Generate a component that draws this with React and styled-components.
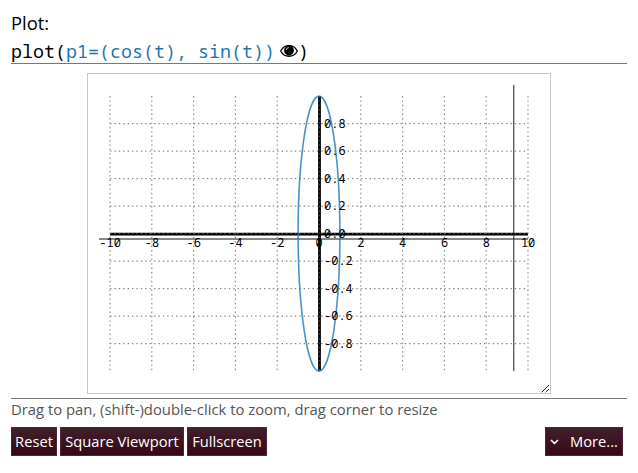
import React from "react";
import styled, { createGlobalStyle } from "styled-components";

const GlobalStyle = createGlobalStyle`
  body {
    margin: 0;
    background: #fff;
    color: #000;
    font-family: "Open Sans", sans-serif;
  }
`;

const Page = styled.main`
  display: flex;
  flex-direction: column;
  box-sizing: border-box;
  height: 473px;
  padding: 9px 11px 0;
  overflow: hidden;
`;

const Title = styled.div`
  height: 29px;
  font-size: 18.33px;
  line-height: 28px;
`;

const Expression = styled.div`
  display: flex;
  align-items: center;
  box-sizing: border-box;
  height: 26px;
  width: 616px;
  border-bottom: 1px solid #777;
  font: 18.33px/26px "Noto Sans Mono", "DejaVu Sans Mono", monospace;
  white-space: pre;
`;

const Argument = styled.span`
  color: #1f77b4;
`;

const EyeIcon = styled.svg`
  width: 18px;
  height: 14px;
  margin: 1px 0 0 5px;
`;

const PlotArea = styled.section`
  display: flex;
  box-sizing: border-box;
  width: 616px;
  height: 335px;
  padding: 9px 0 0 76px;
  border-bottom: 1px solid #777;
`;

const PlotFrame = styled.div`
  box-sizing: border-box;
  width: 464px;
  height: 321px;
  border: 1px solid #c8c8c8;
`;

const Chart = styled.svg`
  display: block;
  width: 462px;
  height: 319px;
`;

const TickLabel = styled.text`
  font: 12px "Noto Sans Mono", "DejaVu Sans Mono", monospace;
  fill: #000;
`;

const Hint = styled.div`
  height: 22px;
  color: #555;
  font-size: 14.83px;
  line-height: 20px;
`;

const Toolbar = styled.div`
  display: flex;
  gap: 3px;
  width: 612px;
  margin-top: 6px;
`;

const Button = styled.button`
  display: flex;
  align-items: center;
  justify-content: center;
  box-sizing: border-box;
  width: ${(p) => p.$width}px;
  height: 29px;
  margin: 0 0 0 ${(p) => (p.$end ? "auto" : "0")};
  padding: 0;
  gap: 11px;
  border: 1px solid #54233a;
  background: linear-gradient(#40202a, #360818);
  color: #fff;
  font: 14.7px/27px "Open Sans", sans-serif;
  white-space: nowrap;
`;

const X0 = 319;
const Y0 = 233.6;
const UNIT_X = 20.9;
const UNIT_Y = 137.5;
const xTicks = [-10, -8, -6, -4, -2, 0, 2, 4, 6, 8, 10];
const yTicks = [0.8, 0.6, 0.4, 0.2, 0, -0.2, -0.4, -0.6, -0.8];

function Plot() {
  return (
    <Chart viewBox="88 74 462 319">
      <line x1="110" x2="528" y1="234.2" y2="234.2" stroke="#000" strokeWidth="2.8" />
      <line x1="319.5" x2="319.5" y1="96" y2="371" stroke="#000" strokeWidth="2.8" />
      <g stroke="#888" strokeDasharray="1.4 3">
        {xTicks.map((t) => (
          <line
            key={t}
            x1={X0 + t * UNIT_X}
            x2={X0 + t * UNIT_X}
            y1="96"
            y2="371"
            strokeWidth={t === 0 ? 0.5 : 1.15}
            transform={t === 0 ? "translate(.5 0)" : undefined}
          />
        ))}
        {yTicks.map((t) => (
          <line
            key={t}
            x1="110"
            x2="528"
            y1={Y0 - t * UNIT_Y}
            y2={Y0 - t * UNIT_Y}
            strokeWidth={t === 0 ? 0.7 : 1.15}
          />
        ))}
      </g>
      <line x1="99" x2="528" y1="239" y2="239" stroke="#111" />
      <line x1="513.8" x2="513.8" y1="85" y2="371" stroke="#222" />
      <ellipse cx={X0} cy={Y0} rx={UNIT_X} ry={UNIT_Y} fill="none" stroke="#1f77b4" strokeOpacity=".8" strokeWidth="1.6" />
      {xTicks.map((t) => (
        <TickLabel key={t} x={X0 + 0.1 + t * UNIT_X} y="247" textAnchor="middle">{t}</TickLabel>
      ))}
      {yTicks.map((t) => (
        <TickLabel key={t} x="324" y={Y0 + 4.1 - t * UNIT_Y}>{t.toFixed(1)}</TickLabel>
      ))}
      <path d="M541.7 392.3l7.3-7.3M545.7 392.3l3.3-3.3" stroke="#333" />
    </Chart>
  );
}

export default function App() {
  return (
    <>
      <GlobalStyle />
      <Page>
        <Title>Plot:</Title>
        <Expression>
          plot(<Argument>p1=(cos(t), sin(t))</Argument>
          <EyeIcon viewBox="0 0 18 14">
            <path d="M.7 7C4.3 -.2 13.7 -.2 17.3 7C13.7 14 4.3 14 .7 7Z" fill="none" stroke="#000" strokeWidth="1.3" />
            <circle cx="9" cy="6.5" r="4.9" />
            <path d="M6.3 6.2A2.6 2.6 0 0 1 9 3.6" fill="none" stroke="#fff" strokeWidth=".7" />
          </EyeIcon>)
        </Expression>
        <PlotArea>
          <PlotFrame>
            <Plot />
          </PlotFrame>
        </PlotArea>
        <Hint>Drag to pan, (shift-)double-click to zoom, drag corner to resize</Hint>
        <Toolbar>
          <Button $width={46}>Reset</Button>
          <Button $width={124}>Square Viewport</Button>
          <Button $width={80}>Fullscreen</Button>
          <Button $width={78} $end>
            <svg width="9" height="6" viewBox="0 0 9 6">
              <path d="M1 1l3.5 3.3L8 1" fill="none" stroke="#fff" strokeWidth="1.6" />
            </svg>
            More...
          </Button>
        </Toolbar>
      </Page>
    </>
  );
}
